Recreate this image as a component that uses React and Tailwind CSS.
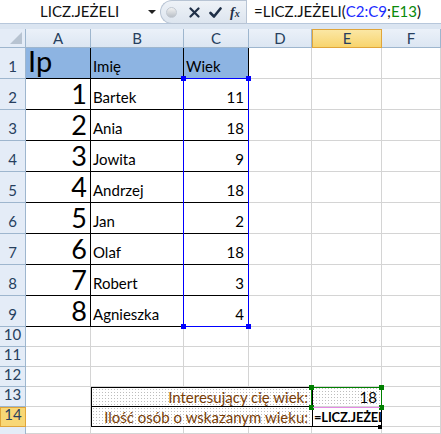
import React from 'react';

const FONT = { fontFamily: 'Lato, "Open Sans", sans-serif' };

const people = [
  [1, 'Bartek', 11],
  [2, 'Ania', 18],
  [3, 'Jowita', 9],
  [4, 'Andrzej', 18],
  [5, 'Jan', 2],
  [6, 'Olaf', 18],
  [7, 'Robert', 3],
  [8, 'Agnieszka', 4],
];

const COLS = ['A', 'B', 'C', 'D', 'E', 'F'];

const grid = 'border-r border-b border-[#d4d4d4]';
const dots = 'bg-[radial-gradient(#bdbdbd_0.8px,transparent_0.9px)] bg-[length:3px_3px]';

const RowHead = ({ n, active }) => (
  <div
    className={`flex items-end justify-center pb-[1px] text-[15px] ${
      active
        ? 'bg-[#f8d776] border border-[#e0a53a] text-[#273f5e]'
        : 'bg-[#e4ecf7] border-r border-b border-[#9eb6ce] text-[#273f5e]'
    }`}
  >
    {n}
  </div>
);

const Corner = ({ className, color }) => (
  <span className={`absolute w-[5px] h-[5px] ${color} ${className}`} />
);

const FormulaBar = () => (
  <div className="h-[29px] bg-[#dbe5f1] flex flex-col">
    <div className="h-[24px] bg-white flex items-stretch border-b border-[#b7c7db]">
      <div className="w-[160px] flex items-center relative">
        <span className="ml-[40px] text-[15px] text-[#111]">LICZ.JEŻELI</span>
        <span className="absolute left-[148px] top-[10px] w-0 h-0 border-l-[4px] border-r-[4px] border-t-[4px] border-l-transparent border-r-transparent border-t-[#222]" />
      </div>
      <div className="w-[86px] -mb-[1px] rounded-l-full bg-gradient-to-b from-[#eef2f7] to-[#dde5ef] border border-r-0 border-[#b8c4d4] flex items-center">
        <span className="ml-[5px] w-[11px] h-[11px] rounded-full bg-gradient-to-b from-[#f2f2f2] to-[#b9bfc7] border border-[#c2c9d2]" />
        <svg className="ml-[12px]" width="11" height="11" viewBox="0 0 11 11">
          <path d="M1.5 1.5 L9.5 9.5 M9.5 1.5 L1.5 9.5" stroke="#1f2f47" strokeWidth="2.2" strokeLinecap="round" />
        </svg>
        <svg className="ml-[9px]" width="13" height="11" viewBox="0 0 13 11">
          <path d="M1.5 6 L5 9.5 L11.5 1.5" stroke="#1f2f47" strokeWidth="2.6" fill="none" strokeLinecap="round" strokeLinejoin="round" />
        </svg>
        <span className="ml-[8px] italic font-bold text-[14px] text-[#1f2f47]" style={{ fontFamily: '"Liberation Serif", serif' }}>
          f<span className="text-[10px]">x</span>
        </span>
      </div>
      <div className="flex-1 border-l border-[#b8c4d4] flex items-center pl-[7px] text-[15px] text-[#111]">
        =LICZ.JEŻELI(<span className="text-[#1a2bff]">C2:C9</span>;<span className="text-[#0a8a0a]">E13</span>)
      </div>
    </div>
  </div>
);

export default function App() {
  return (
    <div className="w-[441px] h-[434px] overflow-hidden bg-white" style={FONT}>
      <FormulaBar />
      <div className="relative grid grid-cols-[26px_65px_93px_65px_63px_70px_1fr] grid-rows-[19px_31px_repeat(8,31px)_repeat(5,20px)_1fr] h-[405px]">
        {/* column headers */}
        <div className="bg-[#e4ecf7] border-r border-b border-[#9eb6ce] relative">
          <svg className="absolute right-[3px] bottom-[3px]" width="12" height="12" viewBox="0 0 12 12">
            <path d="M12 0 L12 12 L0 12 Z" fill="#b7c3d1" />
          </svg>
        </div>
        {COLS.map((c) => (
          <div
            key={c}
            className={`flex items-center justify-center text-[15px] text-[#273f5e] ${
              c === 'E'
                ? 'bg-gradient-to-b from-[#fbe7a4] to-[#f8d46c] border border-[#e0a53a]'
                : 'bg-gradient-to-b from-[#ebf1f9] to-[#dce6f2] border-r border-b border-[#9eb6ce]'
            }`}
          >
            {c}
          </div>
        ))}

        {/* row 1 */}
        <RowHead n={1} />
        <div className="bg-[#8db4e2] border-r border-b border-black flex items-end pl-[2px] text-[29px] leading-none pb-[3px] text-black">Ip</div>
        <div className="bg-[#8db4e2] border-r border-b border-black flex items-end pl-[2px] pb-[1px] text-[15px] text-black">Imię</div>
        <div className="bg-[#8db4e2] border-r border-b border-black flex items-end pl-[2px] pb-[1px] text-[15px] text-black">Wiek</div>
        <div className={grid} />
        <div className={grid} />
        <div className={grid} />

        {/* rows 2-9 */}
        {people.map(([n, name, age], i) => (
          <React.Fragment key={n}>
            <RowHead n={i + 2} />
            <div className="border-r border-b border-black flex items-end justify-end pr-[3px] text-[27px] leading-none pb-[2px] text-black">{n}</div>
            <div className="border-r border-b border-black flex items-end pl-[2px] pb-[1px] text-[15px] text-black">{name}</div>
            <div className="border-r border-b border-black flex items-end justify-end pr-[4px] pb-[1px] text-[15px] text-black">{age}</div>
            <div className={grid} />
            <div className={grid} />
            <div className={grid} />
          </React.Fragment>
        ))}

        {/* rows 10-12 */}
        {[10, 11, 12].map((r) => (
          <React.Fragment key={r}>
            <RowHead n={r} />
            {COLS.map((c) => (
              <div key={c} className={grid} />
            ))}
          </React.Fragment>
        ))}

        {/* row 13 */}
        <RowHead n={13} />
        <div className={grid} />
        <div className={`col-span-3 border border-black -mr-px ${dots} flex items-end justify-end pr-[4px] text-[15px] leading-[18px] text-[#7a3d05]`}>
          Interesujący cię wiek:
        </div>
        <div className={`${grid} ${dots} flex items-end justify-end pr-[4px] text-[15px] leading-[18px] text-black`}>18</div>
        <div className={grid} />

        {/* row 14 */}
        <RowHead n={14} active />
        <div className={grid} />
        <div className={`col-span-3 border border-t-0 border-black -mr-px ${dots} flex items-end justify-end pr-[4px] text-[15px] leading-[18px] text-[#7a3d05]`}>
          Ilość osób o wskazanym wieku:
        </div>
        <div className="border-r border-b border-black overflow-hidden whitespace-nowrap flex items-end pl-[2px] text-[13px] tracking-[-0.2px] leading-[18px] font-bold text-black">
          =LICZ.JEŻEL
        </div>
        <div className={grid} />

        {/* row 15 (only its top edge is in view) */}
        <div className="bg-[#e4ecf7] border-r border-[#9eb6ce]" />
        {COLS.map((c) => (
          <div key={c} className={grid} />
        ))}

        {/* range highlight C2:C9 */}
        <div className="absolute left-[183px] top-[49px] w-[66px] h-[249px] border border-[#0000ff] pointer-events-none">
          <Corner color="bg-[#0000ff]" className="-left-[3px] -top-[3px]" />
          <Corner color="bg-[#0000ff]" className="-right-[3px] -top-[3px]" />
          <Corner color="bg-[#0000ff]" className="-left-[3px] -bottom-[3px]" />
          <Corner color="bg-[#0000ff]" className="-right-[3px] -bottom-[3px]" />
        </div>

        {/* range highlight E13 */}
        <div className="absolute left-[311px] top-[358px] w-[71px] h-[21px] border border-[#008000] pointer-events-none">
          <Corner color="bg-[#008000]" className="-left-[3px] -top-[3px]" />
          <Corner color="bg-[#008000]" className="-right-[3px] -top-[3px]" />
          <Corner color="bg-[#008000]" className="-left-[3px] -bottom-[3px]" />
          <Corner color="bg-[#008000]" className="-right-[3px] -bottom-[3px]" />
        </div>
        <div className="absolute left-[313px] top-[378px] w-[67px] h-[1px] bg-[#e58be5] pointer-events-none" />
        <span className="absolute left-[378px] top-[396px] w-[4px] h-[4px] bg-black" />
      </div>
    </div>
  );
}
